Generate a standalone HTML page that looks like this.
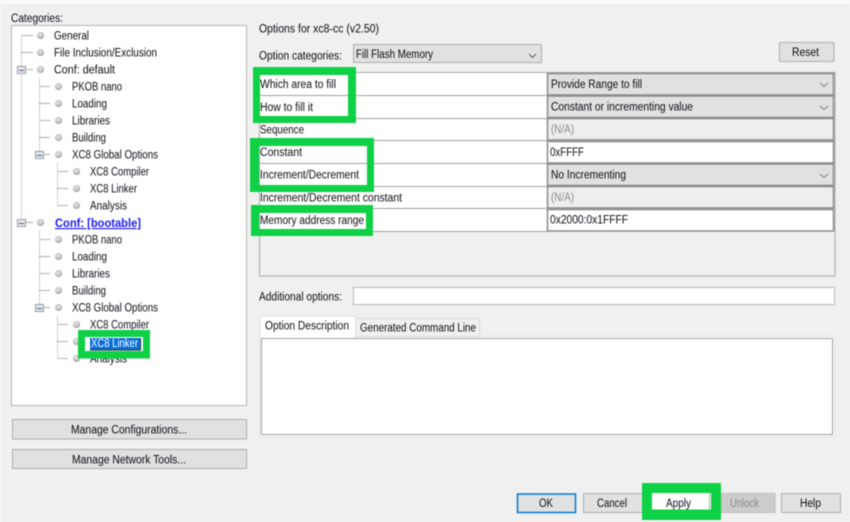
<!DOCTYPE html>
<html><head><meta charset="utf-8">
<style>
html,body{margin:0;padding:0;background:#f0f0f0;width:850px;height:522px;overflow:hidden}
svg{display:block;position:absolute;left:0;top:0;filter:blur(.4px)}
text{font-family:"Liberation Sans",sans-serif;font-size:11.5px;fill:#0c0c14}
</style></head><body>
<svg width="850" height="522" viewBox="0 0 850 522" xmlns="http://www.w3.org/2000/svg">
<defs><radialGradient id="d" cx=".45" cy=".4" r=".65"><stop offset="0" stop-color="#ececec"/><stop offset=".55" stop-color="#c4c4c4"/><stop offset="1" stop-color="#8e8e8e"/></radialGradient></defs>
<rect width="850" height="522" fill="#f0f0f0"/>
<rect width="850" height="4" fill="#fbfbfb"/>
<rect x="0" y="0" width="1" height="522" fill="#fbfbfb"/>

<text x="11" y="22" textLength="52" lengthAdjust="spacingAndGlyphs">Categories:</text>
<rect x="11.5" y="25.5" width="235" height="380" fill="#fff" stroke="#b4b4b4"/>

<g stroke="#a8a8a8" stroke-dasharray="1 1" fill="none">
<path d="M21.5 35V218M39.5 78V151M57.5 163V205M39.5 231V304M57.5 316V359"/>
</g>
<g stroke="#b0b0b0" fill="none">
<path d="M21 35.500H33M21 52.500H33M26 69.500H33M39 86.500H50M39 103.500H50M39 120.500H50M39 137.500H50M44 154.500H50M57 171.500H68M57 188.500H68M57 205.500H68M26 222.500H33M39 239.500H50M39 256.500H50M39 273.500H50M39 290.500H50M44 307.500H50M57 324.500H68M57 341.500H68M57 358.500H68"/>
</g>
<g fill="#e6eaee" stroke="#9a9a9a">
<rect x="17.5" y="66.5" width="8" height="7"/><rect x="17.5" y="219.5" width="8" height="7"/><rect x="35.5" y="151.5" width="8" height="7"/><rect x="35.5" y="304.5" width="8" height="7"/>
</g>
<g fill="#3c5a94">
<rect x="19" y="70" width="5" height="1"/><rect x="19" y="223" width="5" height="1"/><rect x="37" y="155" width="5" height="1"/><rect x="37" y="308" width="5" height="1"/>
</g>
<g fill="url(#d)">
<circle cx="40.5" cy="35.5" r="3.5"/><circle cx="40.5" cy="52.5" r="3.5"/><circle cx="40.5" cy="69.5" r="3.5"/>
<circle cx="58.5" cy="86.5" r="3.5"/><circle cx="58.5" cy="103.5" r="3.5"/><circle cx="58.5" cy="120.5" r="3.5"/><circle cx="58.5" cy="137.5" r="3.5"/><circle cx="58.5" cy="154.5" r="3.5"/>
<circle cx="76.5" cy="171.5" r="3.5"/><circle cx="76.5" cy="188.5" r="3.5"/><circle cx="76.5" cy="205.5" r="3.5"/>
<circle cx="40.5" cy="222.5" r="3.5"/>
<circle cx="58.5" cy="239.5" r="3.5"/><circle cx="58.5" cy="256.5" r="3.5"/><circle cx="58.5" cy="273.5" r="3.5"/><circle cx="58.5" cy="290.5" r="3.5"/><circle cx="58.5" cy="307.5" r="3.5"/>
<circle cx="76.5" cy="324.5" r="3.5"/><circle cx="76.5" cy="341.5" r="3.5"/><circle cx="76.5" cy="358.5" r="3.5"/>
</g>
<text x="54" y="39.500" textLength="35" lengthAdjust="spacingAndGlyphs">General</text>
<text x="54" y="56.500" textLength="103" lengthAdjust="spacingAndGlyphs">File Inclusion/Exclusion</text>
<text x="54" y="73.500" textLength="61" lengthAdjust="spacingAndGlyphs">Conf: default</text>
<text x="72" y="90.500" textLength="50" lengthAdjust="spacingAndGlyphs">PKOB nano</text>
<text x="72" y="107.500" textLength="35" lengthAdjust="spacingAndGlyphs">Loading</text>
<text x="72" y="124.500" textLength="38" lengthAdjust="spacingAndGlyphs">Libraries</text>
<text x="72" y="141.500" textLength="34" lengthAdjust="spacingAndGlyphs">Building</text>
<text x="72" y="158.500" textLength="86" lengthAdjust="spacingAndGlyphs">XC8 Global Options</text>
<text x="90" y="175.500" textLength="59" lengthAdjust="spacingAndGlyphs">XC8 Compiler</text>
<text x="90" y="192.500" textLength="47" lengthAdjust="spacingAndGlyphs">XC8 Linker</text>
<text x="90" y="209.500" textLength="37" lengthAdjust="spacingAndGlyphs">Analysis</text>
<text x="55" y="227" textLength="86" lengthAdjust="spacingAndGlyphs" style="fill:#1a1aff;font-weight:bold;text-decoration:underline">Conf: [bootable]</text>
<text x="72" y="243.500" textLength="50" lengthAdjust="spacingAndGlyphs">PKOB nano</text>
<text x="72" y="260.500" textLength="35" lengthAdjust="spacingAndGlyphs">Loading</text>
<text x="72" y="277.500" textLength="38" lengthAdjust="spacingAndGlyphs">Libraries</text>
<text x="72" y="294.500" textLength="34" lengthAdjust="spacingAndGlyphs">Building</text>
<text x="72" y="311.500" textLength="86" lengthAdjust="spacingAndGlyphs">XC8 Global Options</text>
<text x="90" y="328.500" textLength="59" lengthAdjust="spacingAndGlyphs">XC8 Compiler</text>
<text x="90" y="362.500" textLength="37" lengthAdjust="spacingAndGlyphs">Analysis</text>

<rect x="78" y="330" width="72" height="28.500" fill="#0ed145"/>
<rect x="85" y="337" width="58" height="14" fill="#fff"/>
<rect x="90" y="338" width="51" height="12" fill="#0a6fd6"/>
<rect x="90" y="349.500" width="51" height="1" fill="#30343c"/>
<rect x="140" y="338" width="1" height="12" fill="#30343c"/>
<text x="91" y="347" textLength="47" lengthAdjust="spacingAndGlyphs" style="fill:#fff">XC8 Linker</text>

<rect x="12.500" y="419.500" width="234" height="19.500" fill="#e1e1e1" stroke="#adadad"/>
<rect x="12.500" y="449.500" width="234" height="19" fill="#e1e1e1" stroke="#adadad"/>
<text x="71" y="433.500" textLength="116" lengthAdjust="spacingAndGlyphs">Manage Configurations...</text>
<text x="72" y="463.500" textLength="114" lengthAdjust="spacingAndGlyphs">Manage Network Tools...</text>

<text x="259" y="32.500" textLength="120" lengthAdjust="spacingAndGlyphs">Options for xc8-cc (v2.50)</text>
<text x="259" y="59.500" textLength="83" lengthAdjust="spacingAndGlyphs">Option categories:</text>
<rect x="353.500" y="44.500" width="188" height="18" fill="#e1e1e1" stroke="#adadad"/>
<text x="356" y="58" textLength="77" lengthAdjust="spacingAndGlyphs">Fill Flash Memory</text>
<path d="M529 54l3.500 3.500L536 54" fill="none" stroke="#606060"/>
<rect x="779.500" y="42.500" width="54.500" height="19" fill="#e1e1e1" stroke="#adadad"/>
<text x="792" y="56" textLength="27" lengthAdjust="spacingAndGlyphs">Reset</text>

<rect x="259.500" y="72.500" width="575.500" height="203.500" fill="#f0f0f0" stroke="#a8a8a8"/>
<rect x="260" y="73" width="287" height="158" fill="#fff"/>
<g fill="#a0a0a0">
<rect x="260" y="95" width="287" height="1"/><rect x="260" y="118" width="287" height="1"/><rect x="260" y="140" width="287" height="1"/><rect x="260" y="163" width="287" height="1"/><rect x="260" y="186" width="287" height="1"/><rect x="260" y="208" width="287" height="1"/><rect x="260" y="231" width="287" height="1"/>
</g>

<g stroke="#8a8a8a" stroke-width="1.500">
<rect x="547.500" y="73.500" width="286" height="21.500" fill="#e1e1e1"/>
<rect x="547.500" y="96" width="286" height="21.500" fill="#e1e1e1"/>
<rect x="547.500" y="118.500" width="286" height="21.500" fill="#eeeeee"/>
<rect x="547.500" y="141.500" width="286" height="21.500" fill="#fff"/>
<rect x="547.500" y="164" width="286" height="21.500" fill="#e1e1e1"/>
<rect x="547.500" y="186.500" width="286" height="21.500" fill="#eeeeee"/>
<rect x="547.500" y="209.500" width="286" height="21.500" fill="#fff"/>
</g>
<g fill="none" stroke="#808080">
<path d="M820 83l4 3.500 4-3.500M820 106l4 3.500 4-3.500M820 174l4 3.500 4-3.500"/>
</g>
<text x="551" y="88" textLength="91" lengthAdjust="spacingAndGlyphs">Provide Range to fill</text>
<text x="551" y="110.500" textLength="142" lengthAdjust="spacingAndGlyphs">Constant or incrementing value</text>
<text x="551" y="133" textLength="23" lengthAdjust="spacingAndGlyphs" style="fill:#8c8c8c">(N/A)</text>
<text x="550" y="156" textLength="34" lengthAdjust="spacingAndGlyphs">0xFFFF</text>
<text x="551" y="178.500" textLength="75" lengthAdjust="spacingAndGlyphs">No Incrementing</text>
<text x="551" y="201" textLength="23" lengthAdjust="spacingAndGlyphs" style="fill:#8c8c8c">(N/A)</text>
<text x="550" y="223.500" textLength="78" lengthAdjust="spacingAndGlyphs">0x2000:0x1FFFF</text>

<g fill="#0ed145">
<path fill-rule="evenodd" d="M253 67H356V123H253ZM260 75V116H348V75Z"/>
<path fill-rule="evenodd" d="M250 138H374V192H250ZM259 146V185H367V146Z"/>
<path fill-rule="evenodd" d="M251 205H373V236H251ZM259 213V229H366V213Z"/>
</g>
<text x="260" y="88" textLength="76" lengthAdjust="spacingAndGlyphs">Which area to fill</text>
<text x="260" y="111" textLength="53" lengthAdjust="spacingAndGlyphs">How to fill it</text>
<text x="260" y="133.500" textLength="44" lengthAdjust="spacingAndGlyphs">Sequence</text>
<text x="260" y="156" textLength="42" lengthAdjust="spacingAndGlyphs">Constant</text>
<text x="260" y="178.500" textLength="99" lengthAdjust="spacingAndGlyphs">Increment/Decrement</text>
<text x="260" y="201.500" textLength="142" lengthAdjust="spacingAndGlyphs">Increment/Decrement constant</text>
<text x="260" y="224" textLength="104" lengthAdjust="spacingAndGlyphs">Memory address range</text>

<text x="259" y="300.500" textLength="83" lengthAdjust="spacingAndGlyphs">Additional options:</text>
<rect x="353.500" y="287.500" width="481" height="17" fill="#fff" stroke="#b4b4b4"/>

<rect x="260" y="336" width="575" height="101" fill="#f8f8f8" stroke="#e4e4e4"/>
<rect x="355.500" y="318.500" width="124" height="18" fill="#f0f0f0" stroke="#d9d9d9"/>
<rect x="260" y="316" width="95.500" height="21" fill="#fff" stroke="#dedede" stroke-width="1"/>
<rect x="261.500" y="338.500" width="571" height="96" fill="#fff" stroke="#a0a0a8"/>
<rect x="261" y="336" width="94" height="2" fill="#fff"/>
<text x="265" y="329.500" textLength="84" lengthAdjust="spacingAndGlyphs">Option Description</text>
<text x="360" y="331.500" textLength="116" lengthAdjust="spacingAndGlyphs">Generated Command Line</text>

<rect x="517.500" y="494" width="58" height="18.500" fill="#e1e1e1" stroke="#0078d7" stroke-width="1.500"/>
<text x="539" y="507" textLength="14" lengthAdjust="spacingAndGlyphs">OK</text>
<rect x="583.500" y="493.500" width="59" height="19" fill="#e1e1e1" stroke="#adadad"/>
<text x="597" y="507" textLength="30" lengthAdjust="spacingAndGlyphs">Cancel</text>
<rect x="721" y="493.500" width="54" height="19" fill="#cccccc" stroke="#bfbfbf"/>
<text x="730" y="507" textLength="29" lengthAdjust="spacingAndGlyphs" style="fill:#8a8a8a">Unlock</text>
<rect x="781.500" y="493.500" width="59" height="19" fill="#e1e1e1" stroke="#adadad"/>
<text x="800" y="507" textLength="21" lengthAdjust="spacingAndGlyphs">Help</text>

<rect x="642" y="483" width="79" height="37" fill="#0ed145"/>
<rect x="652" y="493" width="59" height="16.500" fill="#fff"/>
<rect x="709" y="493" width="1" height="16.500" fill="#adadad"/>
<text x="666" y="507" textLength="25" lengthAdjust="spacingAndGlyphs">Apply</text>
</svg>
</body></html>
